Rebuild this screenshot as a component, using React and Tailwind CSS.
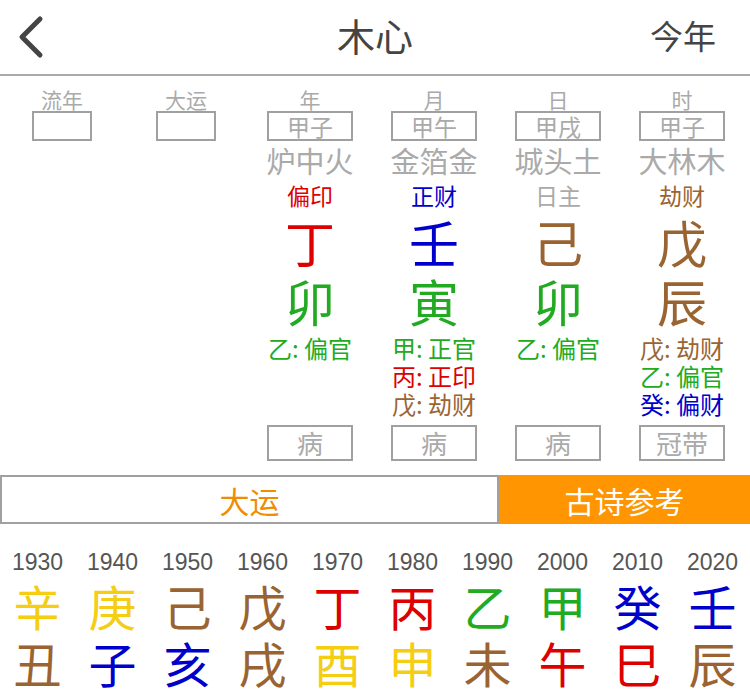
import React from "react";

const C = {
  red: "text-[#dc0000]",
  blue: "text-[#0000cc]",
  green: "text-[#22aa22]",
  brown: "text-[#9a6432]",
  yellow: "text-[#f5cd12]",
  gray: "text-[#aaaaaa]",
};

const pillars = [
  { label: "流年", empty: true },
  { label: "大运", empty: true },
  {
    label: "年", gz: "甲子", nayin: "炉中火", ss: ["偏印", C.red],
    stem: ["丁", C.red], branch: ["卯", C.green],
    hidden: [["乙: 偏官", C.green]], cs: "病",
  },
  {
    label: "月", gz: "甲午", nayin: "金箔金", ss: ["正财", C.blue],
    stem: ["壬", C.blue], branch: ["寅", C.green],
    hidden: [["甲: 正官", C.green], ["丙: 正印", C.red], ["戊: 劫财", C.brown]], cs: "病",
  },
  {
    label: "日", gz: "甲戌", nayin: "城头土", ss: ["日主", C.gray],
    stem: ["己", C.brown], branch: ["卯", C.green],
    hidden: [["乙: 偏官", C.green]], cs: "病",
  },
  {
    label: "时", gz: "甲子", nayin: "大林木", ss: ["劫财", C.brown],
    stem: ["戊", C.brown], branch: ["辰", C.brown],
    hidden: [["戊: 劫财", C.brown], ["乙: 偏官", C.green], ["癸: 偏财", C.blue]], cs: "冠带",
  },
];

const decades = [
  ["1930", "辛", C.yellow, "丑", C.brown],
  ["1940", "庚", C.yellow, "子", C.blue],
  ["1950", "己", C.brown, "亥", C.blue],
  ["1960", "戊", C.brown, "戌", C.brown],
  ["1970", "丁", C.red, "酉", C.yellow],
  ["1980", "丙", C.red, "申", C.yellow],
  ["1990", "乙", C.green, "未", C.brown],
  ["2000", "甲", C.green, "午", C.red],
  ["2010", "癸", C.blue, "巳", C.red],
  ["2020", "壬", C.blue, "辰", C.brown],
];

function Pillar({ p }) {
  return (
    <div className="flex flex-col items-center">
      <div className="h-[35px] flex items-end justify-center text-[21px] leading-[24px] text-[#aaaaaa]">
        {p.label}
      </div>
      <div
        className={`h-[30px] ${p.empty ? "w-[60px]" : "w-[86px]"} border-2 border-[#a0a0a0] flex items-center justify-center text-[23px] leading-none text-[#aaaaaa]`}
      >
        {p.gz}
      </div>
      {!p.empty && (
        <>
          <div className="h-[38px] flex items-center text-[29px] leading-none text-[#aaaaaa]">{p.nayin}</div>
          <div className={`h-[32px] flex items-center text-[23px] leading-none ${p.ss[1]}`}>{p.ss[0]}</div>
          <div className={`h-[60px] flex items-center text-[50px] leading-none ${p.stem[1]}`}>{p.stem[0]}</div>
          <div className={`h-[58px] flex items-center text-[50px] leading-none ${p.branch[1]}`}>{p.branch[0]}</div>
          <div className="h-[96px] pt-[5px] flex flex-col items-center">
            {p.hidden.map(([t, c], i) => (
              <div key={i} className={`h-[28px] flex items-center text-[24px] leading-none ${c}`}>{t}</div>
            ))}
          </div>
          <div className="h-[36px] w-[86px] border-2 border-[#a0a0a0] flex items-center justify-center text-[26px] leading-none text-[#aaaaaa]">
            {p.cs}
          </div>
        </>
      )}
    </div>
  );
}

export default function App() {
  return (
    <div
      className="w-[750px] h-[700px] bg-white overflow-hidden"
      style={{ fontFamily: '"Noto Sans CJK SC", "Noto Sans", sans-serif' }}
    >
      <div className="h-[76px] border-b-2 border-[#aaaaaa] grid grid-cols-[100px_1fr_100px] items-center">
        <div className="pl-[16px] flex items-center">
          <svg width="30" height="44" viewBox="0 0 30 44">
            <path d="M24 4 L6 22 L24 40" fill="none" stroke="#444444" strokeWidth="5" strokeLinecap="round" strokeLinejoin="round" />
          </svg>
        </div>
        <div className="text-center text-[38px] leading-none text-[#444444] pb-[4px]">木心</div>
        <div className="text-right pr-[34px] text-[33px] leading-none text-[#444444] pb-[4px]">今年</div>
      </div>

      <div className="grid grid-cols-[repeat(6,124px)]">
        {pillars.map((p, i) => (
          <Pillar key={i} p={p} />
        ))}
      </div>

      <div className="mt-[14px] h-[49px] flex">
        <div className="w-[499px] border-2 border-[#a0a0a0] flex items-center justify-center text-[30px] leading-none text-[#f08c00]">
          大运
        </div>
        <div className="flex-1 bg-[#ff9500] flex items-center justify-center text-[30px] leading-none text-white">
          古诗参考
        </div>
      </div>

      <div className="grid grid-cols-10 pt-[24px]">
        {decades.map(([y, s, sc, b, bc]) => (
          <div key={y} className="flex flex-col items-center">
            <div className="h-[28px] flex items-center text-[23px] leading-none text-[#555555]" style={{ fontFamily: '"Liberation Sans", sans-serif' }}>
              {y}
            </div>
            <div className={`h-[58px] flex items-center text-[48px] leading-none ${sc}`}>{s}</div>
            <div className={`h-[56px] flex items-center text-[48px] leading-none ${bc}`}>{b}</div>
          </div>
        ))}
      </div>
    </div>
  );
}
